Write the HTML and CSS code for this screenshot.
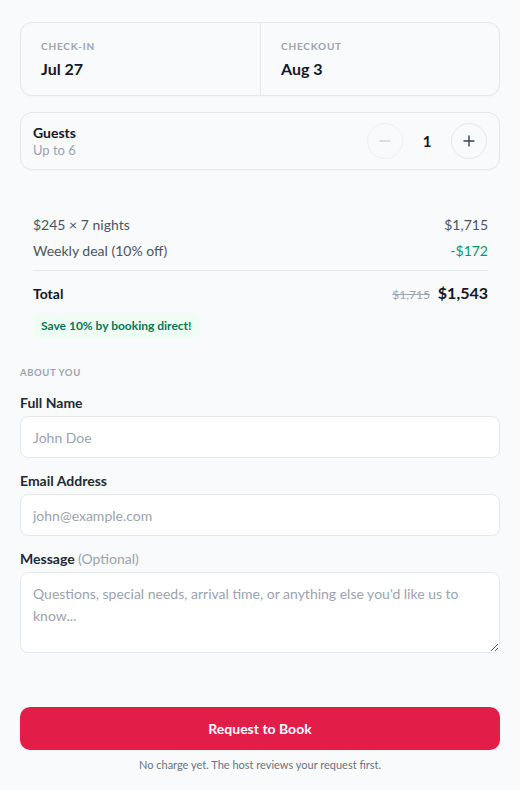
FILE: index.html
```html
<!DOCTYPE html>
<html lang="en">
<head>
<meta charset="utf-8">
<title>Booking</title>
<link rel="stylesheet" href="styles.css">
</head>
<body>
<main class="page">
  <section class="dates">
    <div class="date-cell">
      <div class="date-label">CHECK-IN</div>
      <div class="date-value">Jul 27</div>
    </div>
    <div class="date-cell">
      <div class="date-label">CHECKOUT</div>
      <div class="date-value">Aug 3</div>
    </div>
  </section>

  <section class="guests">
    <div class="guests-text">
      <div class="guests-title">Guests</div>
      <div class="guests-sub">Up to 6</div>
    </div>
    <div class="stepper">
      <button class="step-btn disabled" type="button" aria-label="Decrease">
        <svg width="14" height="14" viewBox="0 0 14 14"><path d="M2 7h10" stroke="currentColor" stroke-width="1.4" stroke-linecap="round"/></svg>
      </button>
      <span class="step-count">1</span>
      <button class="step-btn" type="button" aria-label="Increase">
        <svg width="14" height="14" viewBox="0 0 14 14"><path d="M2 7h10M7 2v10" stroke="currentColor" stroke-width="1.4" stroke-linecap="round"/></svg>
      </button>
    </div>
  </section>

  <section class="price">
    <div class="price-row">
      <span>$245 × 7 nights</span>
      <span>$1,715</span>
    </div>
    <div class="price-row">
      <span>Weekly deal (10% off)</span>
      <span class="discount">-$172</span>
    </div>
    <div class="total-row">
      <span class="total-label">Total</span>
      <span class="total-values"><s class="old">$1,715</s><span class="new">$1,543</span></span>
    </div>
    <div class="badge">Save 10% by booking direct!</div>
  </section>

  <section class="form">
    <div class="section-label">ABOUT YOU</div>
    <label class="field">
      <span class="field-label">Full Name</span>
      <input class="input" type="text" placeholder="John Doe">
    </label>
    <label class="field">
      <span class="field-label">Email Address</span>
      <input class="input" type="email" placeholder="john@example.com">
    </label>
    <label class="field">
      <span class="field-label">Message <span class="optional">(Optional)</span></span>
      <textarea class="textarea" placeholder="Questions, special needs, arrival time, or anything else you'd like us to know..."></textarea>
    </label>
  </section>

  <button class="submit" type="button">Request to Book</button>
  <p class="note">No charge yet. The host reviews your request first.</p>
</main>
</body>
</html>
```

FILE: styles.css
```css
* { box-sizing: border-box; }
html, body { margin: 0; padding: 0; }
body {
  background: #f8fafc;
  font-family: "Lato", "Noto Sans", "Liberation Sans", sans-serif;
  color: #111827;
}
.page {
  padding: 22px 20px 0;
  display: flex;
  flex-direction: column;
}
.dates {
  display: grid;
  grid-template-columns: 1fr 1fr;
  border: 1px solid #e5e7eb;
  border-radius: 12px;
  background: #f8fafc;
  box-shadow: 0 1px 2px rgba(15, 23, 42, 0.03);
}
.date-cell {
  padding: 16px 20px;
}
.date-cell + .date-cell { border-left: 1px solid #e5e7eb; }
.date-label {
  font-size: 10px;
  line-height: 14px;
  font-weight: 700;
  letter-spacing: 0.8px;
  color: #9ca3af;
  margin-bottom: 6px;
}
.date-value {
  font-size: 16px;
  line-height: 20px;
  font-weight: 700;
  color: #111827;
}
.guests {
  margin-top: 16px;
  border: 1px solid #e5e7eb;
  border-radius: 12px;
  padding: 10px 12px;
  display: flex;
  align-items: center;
  justify-content: space-between;
  box-shadow: 0 1px 2px rgba(15, 23, 42, 0.03);
}
.guests-title {
  font-size: 14px;
  line-height: 18px;
  font-weight: 700;
  color: #111827;
}
.guests-sub {
  font-size: 13px;
  line-height: 17px;
  color: #9ca3af;
}
.stepper {
  display: flex;
  align-items: center;
  gap: 12px;
}
.step-btn {
  width: 36px;
  height: 36px;
  border-radius: 50%;
  border: 1px solid #e5e7eb;
  background: #f8fafc;
  color: #374151;
  display: flex;
  align-items: center;
  justify-content: center;
  padding: 0;
}
.step-btn.disabled { color: #d1d5db; border-color: #eef0f3; }
.step-count {
  width: 24px;
  text-align: center;
  font-size: 15px;
  font-weight: 700;
  color: #111827;
}
.price {
  margin-top: 28px;
  padding: 16px 12px 0 13px;
}
.price-row {
  display: flex;
  justify-content: space-between;
  font-size: 14px;
  line-height: 22px;
  color: #4b5563;
}
.price-row + .price-row { margin-top: 4px; }
.discount { color: #059669; }
.total-row {
  margin-top: 8px;
  border-top: 1px solid #e5e7eb;
  padding-top: 10px;
  display: flex;
  justify-content: space-between;
  align-items: center;
  line-height: 24px;
}
.total-label { font-size: 14px; font-weight: 700; color: #111827; }
.total-values { display: flex; align-items: baseline; gap: 8px; }
.old { font-size: 12px; color: #9ca3af; }
.new { font-size: 16px; font-weight: 700; color: #111827; }
.badge {
  margin-top: 7px;
  align-self: flex-start;
  display: inline-block;
  background: #f0fdf4;
  color: #047857;
  font-size: 12px;
  font-weight: 700;
  line-height: 24px;
  padding: 0 9px 0 8px;
  border-radius: 6px;
}
.form {
  margin-top: 28px;
  display: flex;
  flex-direction: column;
}
.section-label {
  font-size: 9.5px;
  line-height: 14px;
  font-weight: 700;
  letter-spacing: 0.6px;
  color: #9ca3af;
  margin-bottom: 13px;
}
.field {
  display: flex;
  flex-direction: column;
}
.field + .field { margin-top: 13px; }
.field-label {
  font-size: 14px;
  line-height: 20px;
  font-weight: 700;
  color: #1f2937;
  margin-bottom: 3px;
}
.optional { font-weight: 400; color: #9ca3af; }
.input, .textarea {
  font-family: inherit;
  font-size: 14px;
  color: #111827;
  background: #ffffff;
  border: 1px solid #e5e7eb;
  border-radius: 8px;
  padding: 0 12px;
  width: 100%;
}
.input { height: 42px; }
.textarea {
  height: 81px;
  padding: 10px 12px;
  line-height: 22px;
  resize: vertical;
}
.input::placeholder, .textarea::placeholder { color: #9ca3af; }
.submit {
  margin-top: 54px;
  height: 43px;
  border: none;
  border-radius: 10px;
  background: #e11d48;
  color: #ffffff;
  font-family: inherit;
  font-size: 14px;
  font-weight: 700;
  width: 100%;
}
.note {
  margin: 8px 0 0;
  text-align: center;
  font-size: 11px;
  line-height: 14px;
  color: #6b7280;
}
```
